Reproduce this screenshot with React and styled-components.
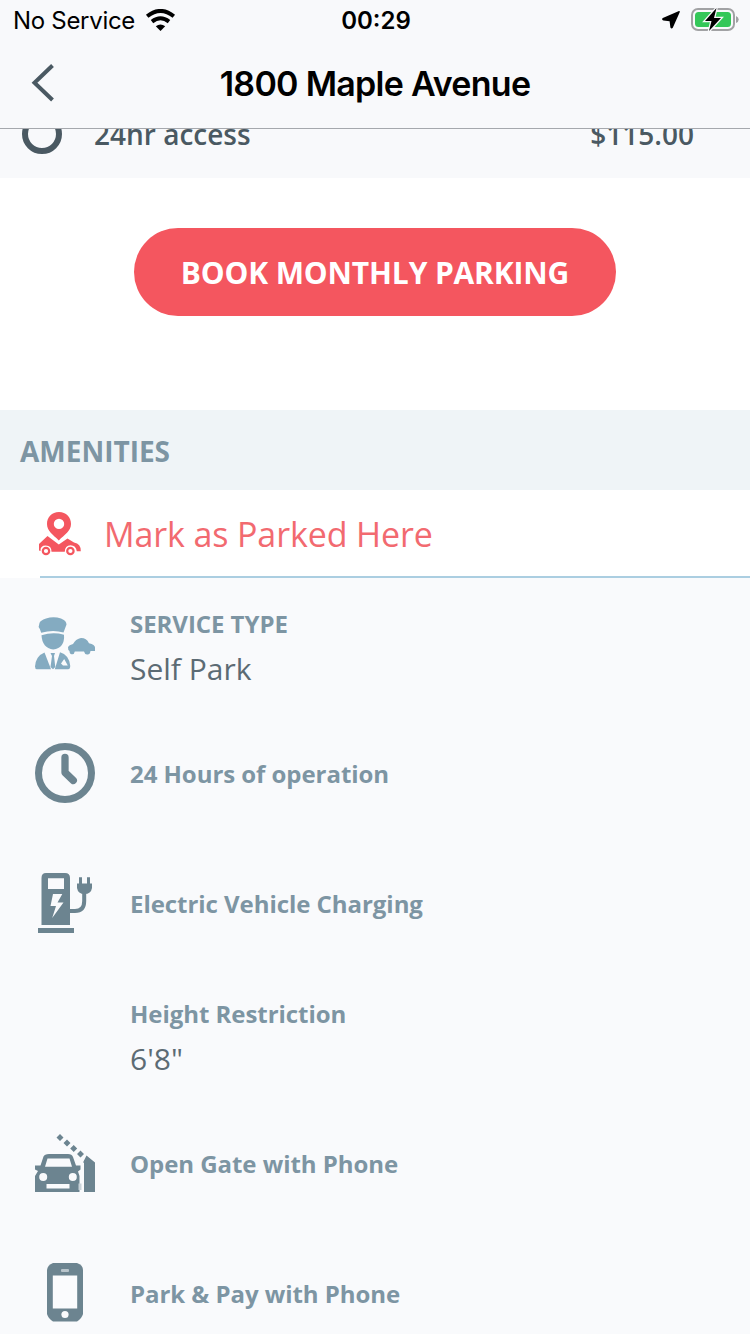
import React from "react";
import styled, { createGlobalStyle } from "styled-components";

const Global = createGlobalStyle`
  * { box-sizing: border-box; }
  body { margin: 0; background: #f9fafc; }
`;

const Screen = styled.div`
  width: 750px;
  height: 1334px;
  overflow: hidden;
  display: flex;
  flex-direction: column;
  background: #f9fafc;
  font-family: "Open Sans", "Noto Sans", sans-serif;
  color: #7d95a3;
  svg { display: block; flex: none; }
`;

const Header = styled.header`
  flex: none;
  height: 129px;
  background: #f8f9fb;
  border-bottom: 1px solid #a5a8ad;
  color: #000;
  font-family: Inter, sans-serif;
`;

const StatusBar = styled.div`
  height: 40px;
  display: grid;
  grid-template-columns: 1fr auto 1fr;
  align-items: center;
  padding: 1px 11px 0 13px;
  font-size: 24px;
  line-height: 38px;
`;

const StatusGroup = styled.div`
  display: flex;
  align-items: center;
  justify-content: ${(p) => (p.$end ? "flex-end" : "flex-start")};
  gap: ${(p) => (p.$end ? 11 : 10)}px;
  svg { margin-top: -1px; }
`;

const Label = styled.span`
  white-space: nowrap;
  letter-spacing: ${(p) => p.$spacing || 0}px;
`;

const Clock = styled.time`
  font-weight: 600;
  letter-spacing: 0;
`;

const NavBar = styled.nav`
  height: 88px;
  display: grid;
  grid-template-columns: 100px 1fr 100px;
  align-items: center;
`;

const BackButton = styled.button`
  border: 0;
  padding: 0 0 3px 31px;
  background: none;
`;

const Title = styled.h1`
  margin: 0;
  text-align: center;
  font-size: 34px;
  font-weight: 600;
  line-height: 44px;
  letter-spacing: -0.72px;
  white-space: nowrap;
`;

const RateRow = styled.div`
  flex: none;
  height: 49px;
  display: flex;
  align-items: flex-start;
  overflow: hidden;
  padding: 0 56px 0 22px;
  background: #f8f9fb;
  color: #4a5962;
  font-size: 28px;
  font-weight: 600;
`;

const Radio = styled.span`
  width: 40px;
  height: 40px;
  margin-top: -15px;
  border: 6px solid #4a5962;
  border-radius: 50%;
`;

const RateText = styled.span`
  margin: -15px 0 0 ${(p) => (p.$push ? "auto" : "32px")};
  line-height: 40px;
`;

const BookingPanel = styled.section`
  flex: none;
  height: 232px;
  padding-top: 50px;
  display: flex;
  justify-content: center;
  align-items: flex-start;
  background: #fff;
`;

const BookButton = styled.button`
  width: 482px;
  height: 88px;
  border: 0;
  border-radius: 44px;
  padding: 0;
  background: #f4565f;
  color: #fff;
  font: 700 30px "Open Sans", sans-serif;
  letter-spacing: -0.15px;
  white-space: nowrap;
`;

const SectionTitle = styled.h2`
  flex: none;
  height: 80px;
  margin: 0;
  padding: 1px 20px 0;
  background: #eff4f7;
  font-size: 28px;
  font-weight: 700;
  line-height: 80px;
`;

const ParkedRow = styled.div`
  flex: none;
  height: 88px;
  padding-left: 40px;
  background: #fff;
`;

const ParkedLink = styled.div`
  height: 88px;
  display: flex;
  align-items: center;
  padding-top: 2px;
  border-bottom: 2px solid #abcee1;
  color: #f26a70;
  font-size: 34px;
  svg { margin: 0 23px 1px -2px; }
`;

const Amenities = styled.ul`
  margin: 0;
  padding: 0;
  list-style: none;
`;

const Amenity = styled.li`
  height: 130px;
  display: flex;
  align-items: center;
  padding: ${(p) => (p.$detailed ? "7px" : "1px")} 0 0 35px;
`;

const IconSlot = styled.div`
  width: 60px;
  height: 60px;
  margin: 0 35px ${(p) => (p.$detailed ? 0 : 1)}px 0;
`;

const AmenityName = styled.div`
  font-size: 24px;
  font-weight: 700;
  line-height: 44px;
  letter-spacing: ${(p) => p.$spacing || 0}px;
`;

const AmenityValue = styled.div`
  color: #5c6b74;
  font-size: 30px;
  line-height: 46px;
`;

const WifiIcon = () => (
  <svg width="31" height="22" viewBox="0 0 31 22">
    <path d="M2.2 7.2Q15.5-3.3 28.8 7.2" fill="none" stroke="#000" strokeWidth="4" />
    <path d="M7 12.6Q15.5 6 24 12.6" fill="none" stroke="#000" strokeWidth="4" />
    <path d="M10.8 17.3Q15.5 13.6 20.2 17.3L15.5 22Z" />
  </svg>
);

const LocationIcon = () => (
  <svg width="18" height="18" viewBox="0 0 18 18">
    <path d="M17 .1Q18.2 0 17.7 1.2L10.8 16.8Q9.5 18.5 8.4 16.5L7.6 10.3L1.4 9.4Q-.8 8.6.8 7.1Z" />
  </svg>
);

const BatteryIcon = () => (
  <svg width="48" height="26" viewBox="0 0 48 26">
    <rect x="1" y="2" width="42" height="21" rx="6" fill="none" stroke="#a1a2a4" strokeWidth="2" />
    <rect x="4" y="5" width="36" height="15" rx="3.5" fill="#34c759" />
    <path d="M45 9Q47.7 10 47.7 12.5T45 16Z" fill="#a1a2a4" />
    <path d="M25.5 1L14 14H20.5L18 24L30 11H23Z" fill="#000" stroke="#f8f9fb" strokeWidth="2.6" paintOrder="stroke" />
  </svg>
);

const ChevronIcon = () => (
  <svg width="24" height="38" viewBox="0 0 24 38">
    <path d="M21.5 1.5L3.5 18.8L21.5 36" fill="none" stroke="#4a5962" strokeWidth="4" />
  </svg>
);

const ParkedIcon = () => (
  <svg width="43" height="44" viewBox="0 0 43 44" fill="#f4565f">
    <path fillRule="evenodd" d="M21 0C13.8 0 9 5.2 9 12C9 19 15 22.5 20.8 28.5C26.5 22.5 33 19 33 12C33 5.2 28.2 0 21 0ZM21 6.7A5.2 5.2 0 1 1 21 17.1A5.2 5.2 0 0 1 21 6.7Z" />
    <path d="M9.5 24L20.8 32.5L29.5 26.5L36 30.5Q43 31.5 42.8 39.3H38.8Q38 33.3 32.5 33.3T26.8 39.8H13.5Q13.5 33.5 7.8 33.5T2.5 39L1 38.6V32Z" />
    <circle cx="8" cy="39" r="3.2" fill="none" stroke="#f4565f" strokeWidth="2.2" />
    <circle cx="32.4" cy="39" r="3.2" fill="none" stroke="#f4565f" strokeWidth="2.2" />
  </svg>
);

const ValetIcon = () => (
  <svg width="60" height="60" viewBox="0 0 60 60" fill="#84abc1">
    <path d="M4.5 6Q5 3.5 11 1.5Q18.5-.8 26 1.5Q31.5 3.5 31.5 7.5L28.5 15.5Q18 12.2 6.2 15.8Q5 11.5 3.6 10Z" />
    <path d="M6.5 18.2Q18 14.6 29 17.7Q30 31 18.2 32.4Q7.2 31 6.5 18.2Z" />
    <path d="M9.5 35.5L16 52.2H2Q0 52.2 0 49.5Q.8 39 9.5 35.5Z" />
    <path fillRule="evenodd" d="M25 35.3Q34 38 35.2 48.5Q35.5 52.2 33 52.2H19.8ZM29.2 42L26 46.5L28 48.4H32.8Z" />
    <path d="M15.5 36H20L19 39L20.3 50L18 52.2L15.5 50L17 39Z" />
    <path d="M34.5 34Q32.8 33 33 30Q34 27.8 38 27Q41 22 45 21.2Q51 20.5 54 26.2Q60 27.5 60 30.5V34H55.5Q55 38 52 37.5Q49.5 37 49 34.5H39.8Q39 38 36.6 37.2Q34.5 37 34.5 34Z" />
  </svg>
);

const HoursIcon = () => (
  <svg width="60" height="60" viewBox="0 0 60 60" fill="none" stroke="#6c8490" strokeWidth="7">
    <circle cx="30" cy="30" r="26.5" />
    <path d="M30 14.5V29.5L38.3 37.5" strokeWidth="7.3" strokeLinecap="round" strokeLinejoin="round" />
  </svg>
);

const ChargerIcon = () => (
  <svg width="60" height="60" viewBox="0 0 60 60" fill="#6c8490">
    <path fillRule="evenodd" d="M11 0H30Q35 0 35 5V52H6.5V5Q6.5 0 11 0ZM13 5.3V16H29V5.3ZM18 21L15.5 33H21L17.2 45L28.5 29.5H22.5L27.3 21Z" />
    <path d="M3 55H39V60H3Z" />
    <path d="M35 38H40Q49.2 38 49.2 28V19" fill="none" stroke="#6c8490" strokeWidth="4" />
    <path d="M42 10.5H57V15Q56 21 49.5 21T42 15ZM44 4.3H47V12H44ZM52 4.3H55V12H52Z" />
  </svg>
);

const GateIcon = () => (
  <svg width="60" height="60" viewBox="0 -1 60 60" fill="#6c8490">
    <path fillRule="evenodd" d="M14 20H33Q37 20 38 23L41 31.5H45.5V35.5L43 37.5L44.5 42V58H0V42L3 37L0 35.5V31.5H5.5L8.5 22.5Q9.5 20 14 20ZM12.5 24.5L10 32.8H37L34.5 24.5ZM8.2 39A4 4 0 1 0 8.2 47A4 4 0 0 0 8.2 39ZM37.8 39A4 4 0 1 0 37.8 47A4 4 0 0 0 37.8 39ZM11.5 50V54.5H34.5V50Z" />
    <path d="M49 26L60 30.5V58H49Z" />
    <path d="M25 0L28.5 3.5L25 7L21.5 3.5ZM32 5.5L35.5 9L32 12.5L28.5 9ZM38.7 11L42.2 14.5L38.7 18L35.2 14.5ZM45.5 16.5L49 20L45.5 23.5L42 20ZM51.5 21.5L60 28.5V31L48 28.5Z" />
    <path d="M43.5 49.5H46.5V56H43.5Z" fill="#c9d2d8" />
  </svg>
);

const PhoneIcon = () => (
  <svg width="60" height="60" viewBox="0 0 60 60">
    <path d="M18 0H42Q48 2 48 7V51Q46.5 56 42 58.5H18Q13.5 56 12 51V7Q12.5 2 18 0Z" fill="#6c8490" />
    <path d="M17.8 12.5H42.2V45.5H17.8Z" fill="#fafbfd" />
    <rect x="26" y="6" width="8" height="3" rx="1" fill="#b8c4cb" />
    <circle cx="30" cy="51.5" r="3.6" fill="#fafbfd" />
  </svg>
);

const amenities = [
  { name: "SERVICE TYPE", value: "Self Park", Icon: ValetIcon },
  { name: "24 Hours of operation", Icon: HoursIcon },
  { name: "Electric Vehicle Charging", Icon: ChargerIcon },
  { name: "Height Restriction", value: "6'8\"" },
  { name: "Open Gate with Phone", Icon: GateIcon },
  { name: "Park & Pay with Phone", Icon: PhoneIcon },
];

export default function App() {
  return (
    <Screen>
      <Global />
      <Header>
        <StatusBar>
          <StatusGroup><Label $spacing={-0.3}>No Service</Label><WifiIcon /></StatusGroup>
          <Clock>00:29</Clock>
          <StatusGroup $end><LocationIcon /><BatteryIcon /></StatusGroup>
        </StatusBar>
        <NavBar>
          <BackButton aria-label="Back"><ChevronIcon /></BackButton>
          <Title>1800 Maple Avenue</Title>
        </NavBar>
      </Header>
      <RateRow>
        <Radio />
        <RateText>24hr access</RateText>
        <RateText $push>$115.00</RateText>
      </RateRow>
      <BookingPanel><BookButton>BOOK MONTHLY PARKING</BookButton></BookingPanel>
      <SectionTitle>AMENITIES</SectionTitle>
      <ParkedRow><ParkedLink><ParkedIcon /><Label $spacing={-0.12}>Mark as Parked Here</Label></ParkedLink></ParkedRow>
      <Amenities>
        {amenities.map(({ name, value, Icon }) => (
          <Amenity key={name} $detailed={Boolean(value)}>
            <IconSlot $detailed={Boolean(value)}>{Icon && <Icon />}</IconSlot>
            <div>
              <AmenityName $spacing={-0.05}>{name}</AmenityName>
              {value && <AmenityValue>{value}</AmenityValue>}
            </div>
          </Amenity>
        ))}
      </Amenities>
    </Screen>
  );
}
